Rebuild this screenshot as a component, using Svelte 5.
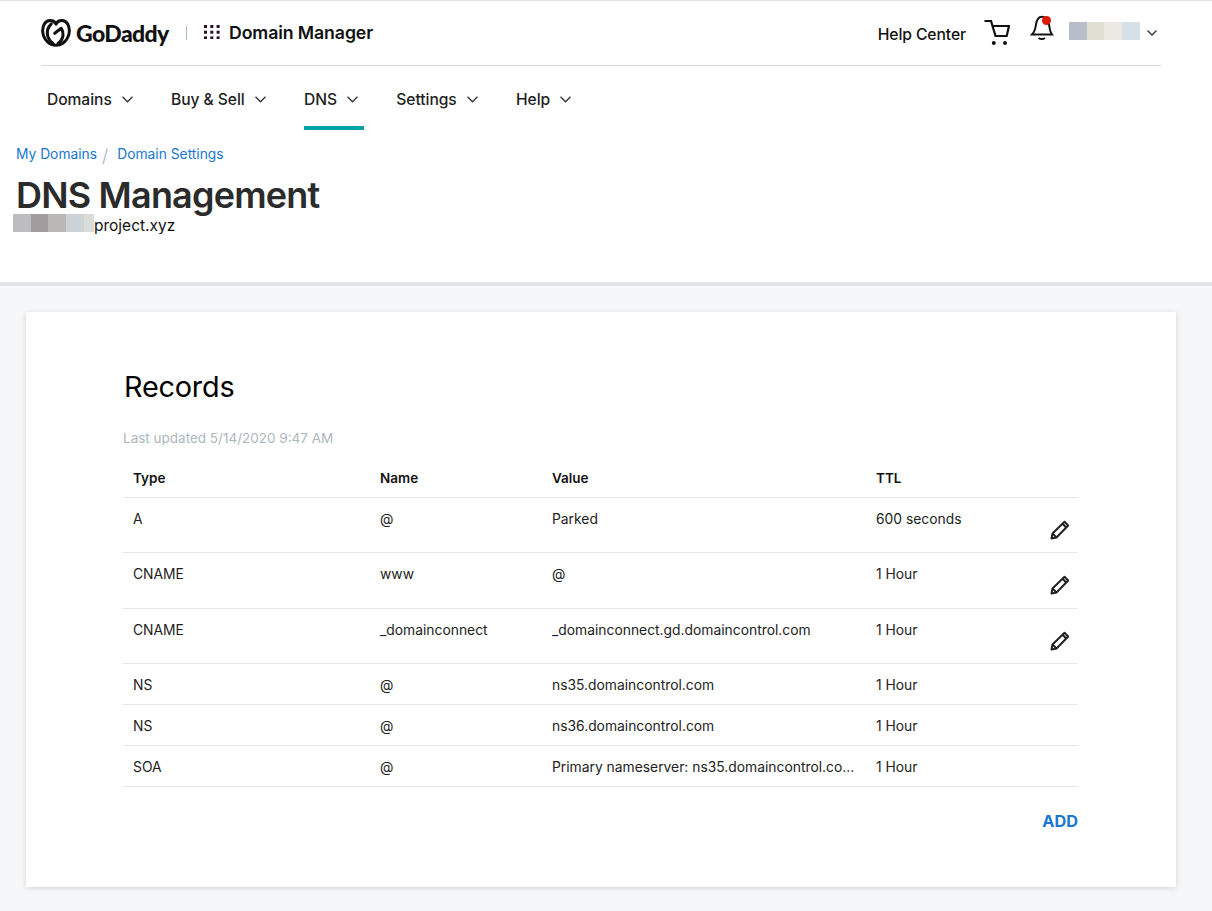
<script>
  const navItems = [
    { label: 'Domains', active: false },
    { label: 'Buy & Sell', active: false },
    { label: 'DNS', active: true },
    { label: 'Settings', active: false },
    { label: 'Help', active: false }
  ];
  const rows = [
    { type: 'A', name: '@', value: 'Parked', ttl: '600 seconds', edit: true },
    { type: 'CNAME', name: 'www', value: '@', ttl: '1 Hour', edit: true },
    { type: 'CNAME', name: '_domainconnect', value: '_domainconnect.gd.domaincontrol.com', ttl: '1 Hour', edit: true },
    { type: 'NS', name: '@', value: 'ns35.domaincontrol.com', ttl: '1 Hour', edit: false },
    { type: 'NS', name: '@', value: 'ns36.domaincontrol.com', ttl: '1 Hour', edit: false },
    { type: 'SOA', name: '@', value: 'Primary nameserver: ns35.domaincontrol.com.', ttl: '1 Hour', edit: false }
  ];
  const userBlur = [
    { c: '#b7bec9', w: 18 },
    { c: '#e0dfd4', w: 17 },
    { c: '#ebe9e1', w: 18 },
    { c: '#d7e0e7', w: 18 }
  ];
  const domainBlur = [
    { c: '#bdbdbf', w: 18 },
    { c: '#a39c9e', w: 17 },
    { c: '#bcb8b5', w: 18 },
    { c: '#cbd3d6', w: 18 },
    { c: '#dadcda', w: 10 }
  ];
</script>

<div class="page">
  <header class="top">
    <div class="brandbar">
      <div class="brand">
        <svg class="heart" viewBox="0 0 30 28" width="30" height="28" fill="none" stroke="#111" stroke-width="3" stroke-linecap="round" stroke-linejoin="round">
          <path d="M15 26.300C8.500 26.300 2.200 20.500 1.700 12.500 1.300 6.500 4.300 1.700 9 1.600 11.800 1.500 14 3 15 5.200 16 3 18.200 1.500 21 1.600 25.700 1.700 28.700 6.500 28.300 12.500 27.800 20.500 21.500 26.300 15 26.300Z" />
          <path d="M10.300 4.800C7 8 5.600 12 6.600 16.500 7.300 19.800 9.300 22.500 12 24.300" />
          <path d="M13.700 14.300 20.300 9.300C21.800 11.500 22.300 14 22 16.500 21.600 19.500 19.800 22.500 17 24.300" />
        </svg>
        <span class="wordmark">GoDaddy</span>
        <span class="sep"></span>
        <svg class="dots" viewBox="0 0 16 14" width="16" height="14" fill="#2a1024">
          {#each [0, 1, 2] as r}
            {#each [0, 1, 2] as c}
              <rect x={c * 6.300} y={r * 5.700} width="3" height="3" />
            {/each}
          {/each}
        </svg>
        <span class="product">Domain Manager</span>
      </div>
      <div class="tools">
        <span class="helpc">Help Center</span>
        <svg class="cart" viewBox="0 0 26 26" width="26" height="26" fill="none" stroke="#111" stroke-width="2.200">
          <path d="M0.500 1H7L11.500 16H22.700L25 6H8.800" />
          <circle cx="9.800" cy="23" r="2" fill="#111" stroke="none" />
          <circle cx="21" cy="23" r="2" fill="#111" stroke="none" />
        </svg>
        <div class="bell">
          <svg viewBox="0 0 24 26" width="24" height="26" fill="none" stroke="#111" stroke-width="2">
            <path d="M2 19.500H22C20.500 17.500 19.800 15 19.300 11 18.700 5.500 16 1.800 12 1.800 8.500 1.800 6.400 5.500 5.800 10.500 5.300 14.500 4 17.500 2 19.500Z" />
            <path d="M8.500 23C10.500 24.300 13 24.300 15 23" stroke-width="2" />
          </svg>
          <span class="reddot"></span>
        </div>
        <div class="blur userblur">
          {#each userBlur as b}<span style="background:{b.c};flex:{b.w}"></span>{/each}
        </div>
        <svg class="chev" viewBox="0 0 10 6" width="10" height="6"><path d="M0.500 0.500 5 5 9.500 0.500" fill="none" stroke="#333" stroke-width="1.300" /></svg>
      </div>
    </div>
    <nav class="nav">
      {#each navItems as item}
        <div class="navitem" class:active={item.active}>
          <span>{item.label}</span>
          <svg viewBox="0 0 11 7" width="11" height="7"><path d="M0.500 0.800 5.500 5.800 10.500 0.800" fill="none" stroke="#333" stroke-width="1.300" /></svg>
        </div>
      {/each}
    </nav>
  </header>

  <section class="titlearea">
    <div class="crumbs">
      <a href="#a">My Domains</a>
      <span class="slash">/</span>
      <a href="#b">Domain Settings</a>
    </div>
    <h1>DNS Management</h1>
    <div class="domain">
      <div class="blur domainblur">
        {#each domainBlur as b}<span style="background:{b.c};flex:{b.w}"></span>{/each}
      </div>
      <span class="dname">project.xyz</span>
    </div>
  </section>

  <main class="content">
    <div class="card">
      <h2>Records</h2>
      <p class="updated">Last updated 5/14/2020 9:47 AM</p>
      <div class="table">
        <div class="row head">
          <div>Type</div><div>Name</div><div>Value</div><div>TTL</div><div></div>
        </div>
        {#each rows as r}
          <div class="row" class:editable={r.edit}>
            <div>{r.type}</div>
            <div>{r.name}</div>
            <div class="val">{r.value}</div>
            <div>{r.ttl}</div>
            <div class="act">
              {#if r.edit}
                <svg viewBox="0 0 20 20" width="20" height="20" fill="none" stroke="#222" stroke-width="2" stroke-linejoin="round">
                  <path d="M1.500 18.500 2.500 13.500 14.500 1.800 18.200 5.500 6.500 17.500Z" />
                  <path d="M2.500 13.500 6.500 17.500" />
                  <path d="M12.500 3.800 16.200 7.500" />
                </svg>
              {/if}
            </div>
          </div>
        {/each}
      </div>
      <div class="addrow"><button type="button">ADD</button></div>
    </div>
  </main>
</div>

<style>
  :global(body) {
    margin: 0;
    background: #f5f7f8;
    font-family: Inter, "Open Sans", sans-serif;
    color: #111;
  }
  .page {
    min-height: 911px;
    overflow: hidden;
  }
  .top {
    background: #fff;
    border-top: 1px solid #e2e2e2;
    padding: 0 51px 0 41px;
  }
  .brandbar {
    height: 64px;
    border-bottom: 1px solid #d8d8d8;
    display: flex;
    align-items: center;
    justify-content: space-between;
  }
  .brand {
    display: flex;
    align-items: center;
  }
  .heart {
    margin-right: 5px;
  }
  .wordmark {
    font-family: Lato, sans-serif;
    font-weight: 900;
    font-size: 23px;
    letter-spacing: -0.6px;
    color: #111;
    width: 94px;
  }
  .sep {
    width: 1px;
    height: 14px;
    background: #a9bac4;
    margin: 0 17px 0 16px;
  }
  .dots {
    margin-right: 9px;
    margin-top: -3px;
  }
  .product {
    font-size: 17.700px;
    font-weight: 600;
    color: #111;
    margin-top: -2px;
    letter-spacing: -0.100px;
  }
  .tools {
    display: flex;
    align-items: center;
    margin-top: -2px;
  }
  .helpc {
    font-size: 15.700px;
    font-weight: 500;
    letter-spacing: -0.100px;
    margin-top: 5px;
    margin-right: 18px;
  }
  .cart {
    margin-right: 20px;
    margin-top: 2px;
  }
  .bell {
    position: relative;
    width: 24px;
    height: 26px;
    margin-right: 15px;
    margin-top: -8px;
  }
  .reddot {
    position: absolute;
    left: 12px;
    top: 1px;
    width: 9px;
    height: 9px;
    border-radius: 50%;
    background: #db1802;
  }
  .blur {
    display: flex;
  }
  .blur span {
    display: block;
    height: 18px;
  }
  .userblur {
    width: 71px;
    margin-right: 7px;
    margin-top: -3px;
  }
  .chev {
    margin-top: 1px;
    margin-right: 4px;
  }
  .nav {
    display: flex;
    height: 64px;
    padding-left: 6px;
    gap: 32.300px;
  }
  .navitem {
    box-sizing: border-box;
    height: 64px;
    padding: 7px 6px 0 0;
    display: flex;
    align-items: center;
    gap: 10px;
    font-size: 15.600px;
    font-weight: 500;
    color: #222;
    border-bottom: 4px solid transparent;
    letter-spacing: -0.050px;
  }
  .navitem.active {
    border-bottom-color: #00a4a6;
  }
  .titlearea {
    background: #fff;
    height: 156px;
    box-sizing: border-box;
    border-bottom: 4px solid #e2e3e4;
    padding: 15px 16px 0;
  }
  .crumbs {
    display: flex;
    align-items: center;
    height: 18px;
    font-size: 13.800px;
    line-height: 18px;
  }
  .crumbs a {
    color: #1976d2;
    text-decoration: none;
  }
  .slash {
    color: #a9b4bb;
    margin: 4px 9px 0 5px;
    font-size: 18px;
    font-weight: 300;
  }
  h1 {
    margin: 14px 0 0;
    font-size: 36px;
    line-height: 36px;
    font-weight: 600;
    color: #2b2b2b;
    letter-spacing: -0.800px;
  }
  .domain {
    display: flex;
    align-items: flex-start;
    font-size: 15.500px;
    line-height: 18px;
    margin-left: -3px;
    margin-top: 1px;
    color: #111;
  }
  .dname {
    padding-top: 3px;
  }
  .domainblur {
    width: 81px;
  }
  .content {
    padding: 26px 36px 24px 26px;
  }
  .card {
    background: #fff;
    box-sizing: border-box;
    height: 575px;
    padding: 56px 98px 0 97px;
    box-shadow: 0 1px 6px rgba(0, 0, 0, 0.14);
  }
  h2 {
    margin: 1px 0 0 1px;
    font-size: 28.800px;
    line-height: 36px;
    font-weight: 400;
    color: #000;
    letter-spacing: -0.200px;
  }
  .updated {
    margin: 24px 0 0;
    font-size: 13.500px;
    line-height: 18px;
    color: #abb7bd;
  }
  .table {
    margin-top: 10px;
    font-size: 13.850px;
    color: #222;
  }
  .row {
    display: grid;
    grid-template-columns: 247px 172px 324px 1fr 50px;
    border-bottom: 1px solid #e6e7e8;
    box-sizing: border-box;
    height: 41px;
    line-height: 18px;
    padding-top: 12px;
    padding-left: 10px;
  }
  .row > div {
    min-width: 0;
  }
  .row.editable {
    height: 55.400px;
  }
  .row.head {
    height: 41px;
    font-size: 13.500px;
    font-weight: 600;
    color: #111;
    padding-top: 12px;
  }
  .val {
    white-space: nowrap;
    overflow: hidden;
    text-overflow: ellipsis;
    padding-right: 20px;
  }
  .act {
    display: flex;
    justify-content: flex-end;
    padding-right: 8px;
    padding-top: 10px;
  }
  .addrow {
    display: flex;
    justify-content: flex-end;
    margin-top: 24px;
  }
  button {
    border: 0;
    background: none;
    padding: 0;
    font: inherit;
    font-size: 16.300px;
    line-height: 20px;
    font-weight: 700;
    color: #1976d2;
  }
</style>
